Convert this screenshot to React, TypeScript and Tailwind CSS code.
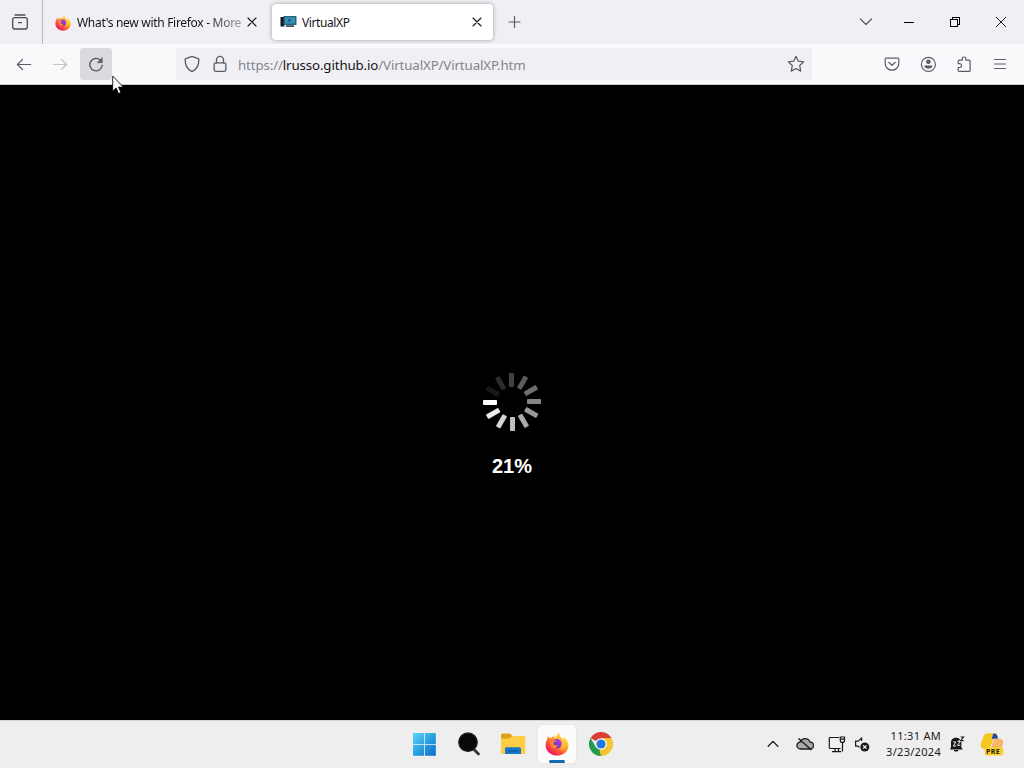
import type { ReactNode } from 'react'

interface IconProps {
    className?: string
}

interface SlotProps {
    className?: string
    children: ReactNode
}

const SPOKES = [
    '#424242', '#5b5b5b', '#6f6f6f', '#858585', '#999999', '#acacac',
    '#bebebe', '#d3d3d3', '#ececec', '#ffffff', '#171717', '#2b2b2b',
]

const stroke = {
    viewBox: '0 0 16 16',
    fill: 'none',
    stroke: 'currentColor',
    strokeWidth: 1.2,
    strokeLinecap: 'round' as const,
    strokeLinejoin: 'round' as const,
}

function Slot({ className = '', children }: SlotProps) {
    return <div className={`flex shrink-0 items-center justify-center ${className}`}>{children}</div>
}

function FirefoxIcon({ className }: IconProps) {
    return (
        <svg viewBox="0 0 24 24" className={className}>
            <defs>
                <linearGradient id="fxBody" x1="0.85" y1="0.1" x2="0.2" y2="0.9">
                    <stop offset="0" stopColor="#fff044" />
                    <stop offset="0.35" stopColor="#ffb02e" />
                    <stop offset="0.65" stopColor="#ff6038" />
                    <stop offset="1" stopColor="#ee1760" />
                </linearGradient>
                <linearGradient id="fxGlobe" x1="0.7" y1="0" x2="0.3" y2="1">
                    <stop offset="0" stopColor="#b13bea" />
                    <stop offset="1" stopColor="#583acb" />
                </linearGradient>
            </defs>
            <path
                d="M14.8 0.5c-1 3 0.5 4 2.3 5.6c0.8 0.7 1.2 1.5 1.5 2.3c0.5-1.3 0.3-2.6 0-3.7c3 2.2 4.9 5.2 4.9 8.7c0 5.7-5 10.1-11.5 10.1S0.6 19 0.6 12.9c0-3 1.1-5 2-6.2V3.9c0.7 0.6 1.2 1.2 1.6 1.9c0.8-0.2 1.7-0.2 2.6 0.1C7.2 4.9 8.2 4 9.4 3.6C9 4.8 9.4 5.6 10.5 6c1-2.7 2.2-4.4 4.3-5.5z"
                fill="url(#fxBody)"
            />
            <circle cx="11.9" cy="11.6" r="4.7" fill="url(#fxGlobe)" />
            <path d="M5.1 7.2c2 1.6 4 1.3 6.1 1.4c-0.5 1.4-2 1.7-2.6 2.2c-0.4 0.7 0 2 1.4 2.3c1.2 0.3 2-0.3 2.8 0c-0.6 1.8-1.8 3.2-3.2 3.4c-3.9-0.6-5.3-5.1-4.5-9.3z" fill="#ff842c" />
            <path d="M15.6 8c2.7 2.9 2.2 8.1-1.3 10.3c5.8-0.6 8.2-5.8 5.3-10.4z" fill="#ffc632" opacity="0.75" />
        </svg>
    )
}

function CloseIcon({ className }: IconProps) {
    return (
        <svg {...stroke} className={className}>
            <path d="M4 4l8 8M12 4l-8 8" strokeWidth="1.1" />
        </svg>
    )
}

function Spinner() {
    return (
        <svg width="60" height="60" viewBox="-30 -30 60 60">
            {SPOKES.map((color, i) => (
                <rect key={color} x="-2" y="-29" width="5" height="14" rx="0.8" fill={color} transform={`rotate(${i * 30}) translate(-1 0)`} />
            ))}
        </svg>
    )
}

function TabStrip() {
    return (
        <div className="flex h-11 shrink-0 bg-[#f0f0f4] text-[#15141a]">
            <Slot className="w-[43px] border-r border-[#b8b8bd] pr-0.5 text-[#4b4b53]">
                <svg width="18" height="18" viewBox="0 0 18 18" fill="none" stroke="currentColor" strokeWidth="1.3" strokeLinecap="round">
                    <path d="M4 2h10" />
                    <rect x="1.7" y="4.6" width="14.6" height="11.4" rx="2" />
                    <path d="M7.5 9.6h3" />
                </svg>
            </Slot>
            <div className="flex h-11 w-[229px] items-center pl-3">
                <FirefoxIcon className="mt-0.5 size-4 shrink-0" />
                <div className="ml-1.5 mt-0.5 w-[165px] whitespace-nowrap text-[12px] tracking-[-0.3px] [mask-image:linear-gradient(to_right,#000_78%,transparent_112%)]">
                    What's new with Firefox - More
                </div>
                <CloseIcon className="ml-0.5 size-4 shrink-0" />
            </div>
            <div className="mt-1 flex h-9 w-[221px] items-center rounded bg-white pl-2 shadow-[0_0_4px_rgba(0,0,0,0.35)]">
                <svg width="18" height="16" viewBox="0 0 18 16">
                    <rect x="0.5" y="3" width="4" height="9.5" fill="#141b20" />
                    <rect x="3.5" y="2" width="13" height="9" rx="0.5" fill="#26647f" />
                    <rect x="5" y="3.3" width="10" height="6.2" fill="#3693b5" />
                    <circle cx="9.5" cy="6.4" r="1.7" fill="#245f91" />
                    <path d="M6 12.1h8" stroke="#263b46" strokeWidth="1.6" />
                </svg>
                <div className="ml-1 mt-0.5 flex-1 text-[12px] tracking-[-0.4px]">VirtualXP</div>
                <CloseIcon className="mr-2 size-4" />
            </div>
            <Slot className="w-[43px] text-[#5b5b66]">
                <svg {...stroke} className="size-4">
                    <path d="M7.5 2.5v11M2 8h11" />
                </svg>
            </Slot>
            <div className="flex-1" />
            <Slot className="w-10 text-[#5b5b66]">
                <svg {...stroke} className="size-4">
                    <path d="M2.5 5l5.5 5.5L13.5 5" />
                </svg>
            </Slot>
            <Slot className="w-[46px]">
                <div className="h-px w-2.5 bg-black" />
            </Slot>
            <Slot className="w-[46px]">
                <svg width="10" height="10" viewBox="0 0 10 10" fill="none" stroke="#000" shapeRendering="crispEdges">
                    <path d="M0.5 2.5h7v7h-7zM2.5 2.5v-2h7v7h-2" />
                </svg>
            </Slot>
            <Slot className="w-[46px]">
                <svg width="10" height="10" viewBox="0 0 10 10" stroke="#000" strokeWidth="0.9">
                    <path d="M0 0l10 10M10 0L0 10" />
                </svg>
            </Slot>
        </div>
    )
}

function Toolbar() {
    return (
        <div className="relative flex h-[41px] shrink-0 items-start border-b border-[#c9c9cd] bg-[#f9f9fb] pl-2 pr-2 pt-1 text-[#5b5b66]">
            <div className="flex gap-1">
                <Slot className="size-8">
                    <svg {...stroke} className="size-4 overflow-visible" strokeWidth="1.2">
                        <path d="M14.7 8.5H1.5M6.5 3.5L1.4 8.5L6.5 13.5" />
                    </svg>
                </Slot>
                <Slot className="size-8 text-[#c2c2c7]">
                    <svg {...stroke} className="size-4 overflow-visible" strokeWidth="1.2">
                        <path d="M1.5 8.5h13M9.5 3.5l5.1 5L9.5 13.5" />
                    </svg>
                </Slot>
                <Slot className="size-8 rounded bg-[#dadbdf]">
                    <svg {...stroke} className="size-4" strokeWidth="1.4">
                        <path d="M12.4 4.2A6.2 6.2 0 1 0 14.2 9.3" />
                        <path d="M14.3 1.8v4.9H9.4z" fill="currentColor" strokeWidth="0.6" />
                    </svg>
                </Slot>
            </div>
            <div className="ml-16 flex h-8 w-[636px] items-center rounded bg-[#f0f0f4]">
                <Slot className="w-8">
                    <svg {...stroke} className="size-[18px]">
                        <path d="M8 1.2l6 2.2c0.4 5.5-1.2 9.2-6 11.4C3.2 12.6 1.6 8.9 2 3.4z" />
                    </svg>
                </Slot>
                <Slot className="w-6">
                    <svg {...stroke} className="size-[18px]">
                        <rect x="2.8" y="7" width="10.4" height="7.5" rx="1.3" />
                        <path d="M4.9 7V4.3a3.1 3.1 0 0 1 6.2 0V7" />
                    </svg>
                </Slot>
                <div className="ml-1.5 flex-1 whitespace-nowrap pt-1 text-[13.3px] tracking-[-0.13px] text-[#84848c]">
                    https://<span className="text-[#15141a]">lrusso.github.io</span>/VirtualXP/VirtualXP.htm
                </div>
                <Slot className="w-8">
                    <svg {...stroke} className="size-[18px]" strokeWidth="1.1">
                        <path d="M8 1.2l2 4.3l4.8 0.6l-3.5 3.3l0.9 4.9L8 12l-4.2 2.3l0.9-4.9L1.2 6.1L6 5.5z" />
                    </svg>
                </Slot>
            </div>
            <div className="flex-1" />
            <div className="flex gap-1">
                <Slot className="size-8">
                    <svg {...stroke} className="size-4">
                        <path d="M2.3 2.2h11.4c0.7 0 1.1 0.4 1.1 1.1v4.1a6.8 6.8 0 0 1-13.6 0V3.3c0-0.7 0.4-1.1 1.1-1.1z" />
                        <path d="M4.7 6.3L8 9.3l3.3-3" />
                    </svg>
                </Slot>
                <Slot className="size-8">
                    <svg {...stroke} className="size-4 overflow-visible">
                        <circle cx="8.4" cy="8.4" r="7" />
                        <circle cx="8.4" cy="5.8" r="2.3" fill="currentColor" stroke="none" />
                        <path d="M4.3 9.4h8.2c0.2 1.8-1.9 3.2-4.1 3.2s-4.3-1.4-4.1-3.2z" fill="currentColor" stroke="none" />
                    </svg>
                </Slot>
                <Slot className="size-8">
                    <svg {...stroke} className="size-4">
                        <path d="M2.2 7.1V5.2c0-0.6 0.4-1 1-1h3.1V2.8a1.8 1.8 0 0 1 3.6 0v1.4h3.2c0.6 0 1 0.4 1 1v9.2c0 0.6-0.4 1-1 1h-9.9c-0.6 0-1-0.4-1-1v-2.9h1.5a1.9 1.9 0 0 0 0-3.8H2.2z" />
                    </svg>
                </Slot>
                <Slot className="size-8">
                    <svg {...stroke} className="size-4">
                        <path d="M2.5 3.5h11M2.5 8h11M2.5 12.5h11" />
                    </svg>
                </Slot>
            </div>
            <svg className="absolute left-28 top-[31px] z-10" width="12" height="20" viewBox="0 0 12 20">
                <path d="M0.7 1v15.2l3.4-3.3l2.4 5.6l2.4-1l-2.4-5.4h4.8z" fill="#fff" stroke="#111" strokeWidth="0.9" />
            </svg>
        </div>
    )
}

function Taskbar() {
    return (
        <div className="flex h-12 shrink-0 border-t border-[#d5d5d5] bg-[#eeeeee] pb-px">
            <div className="ml-[402px] flex items-center">
                <Slot className="w-11">
                    <svg width="24" height="24" viewBox="0 0 24 24">
                        <defs>
                            <linearGradient id="win" x1="0" y1="0" x2="24" y2="24" gradientUnits="userSpaceOnUse">
                                <stop offset="0" stopColor="#5fdcfb" />
                                <stop offset="0.55" stopColor="#279fe0" />
                                <stop offset="1" stopColor="#0b68c3" />
                            </linearGradient>
                        </defs>
                        <path d="M1 1h11v11h-11zM12.8 1h11v11h-11zM1 12.8h11v11h-11zM12.8 12.8h11v11h-11z" fill="url(#win)" />
                    </svg>
                </Slot>
                <Slot className="ml-px w-11">
                    <svg width="24" height="24" viewBox="0 0 24 24">
                        <path d="M16.5 17l5 5" stroke="#303030" strokeWidth="2.6" strokeLinecap="round" />
                        <circle cx="11" cy="10.2" r="9.3" fill="#080808" stroke="#252525" strokeWidth="1.2" />
                    </svg>
                </Slot>
                <Slot className="w-11">
                    <svg width="26" height="24" viewBox="0 0 26 24">
                        <path d="M2 1.5h8l2.6 3H24v6H1v-8z" fill="#dfa016" />
                        <path d="M1 6.5h8.5l2.8-2.4H24c0.8 0 1.2 0.4 1.2 1.2V21c0 0.7-0.4 1.1-1.2 1.1H2c-0.7 0-1.1-0.4-1.1-1.1z" fill="#fccd45" />
                        <path d="M5 22.1v-5.3c0-1 0.6-1.6 1.6-1.6h12.8c1 0 1.6 0.6 1.6 1.6v5.3z" fill="#1676c8" />
                        <path d="M8.5 18.8h9" stroke="#10539a" strokeWidth="1.4" />
                    </svg>
                </Slot>
                <Slot className="w-11">
                    <div className="flex h-[38px] w-[38px] flex-col items-center justify-between rounded bg-[#fcfcfc] pt-[7px] shadow-[0_0_1px_rgba(0,0,0,0.2)]">
                        <FirefoxIcon className="size-6" />
                        <div className="h-[3px] w-4 rounded-full bg-[#1769b0]" />
                    </div>
                </Slot>
                <Slot className="w-11">
                    <svg width="24" height="24" viewBox="0 0 24 24">
                        <path d="M12 12L1.6 6A12 12 0 0 1 22.4 6z" fill="#d93f35" />
                        <path d="M12 12V6h10.4A12 12 0 0 1 12 24z" fill="#f8c530" />
                        <path d="M1.6 6L6.8 15l5.2 3l3 0.2L12 24A12 12 0 0 1 1.6 6z" fill="#269b4b" />
                        <path d="M17.2 15L12 24l-1.5-5.5z" fill="#f8c530" />
                        <circle cx="12" cy="12" r="5.8" fill="#fff" />
                        <circle cx="12" cy="12" r="4.6" fill="#2777e2" />
                    </svg>
                </Slot>
            </div>
            <div className="flex-1" />
            <div className="flex items-center text-[#1b1b1b]">
                <Slot className="w-8">
                    <svg {...stroke} className="size-4">
                        <path d="M3.2 10.2L8 5.4l4.8 4.8" strokeWidth="1.3" />
                    </svg>
                </Slot>
                <Slot className="w-8">
                    <svg width="18" height="16" viewBox="0 0 18 16" fill="none" stroke="currentColor" strokeWidth="1.3">
                        <path d="M4.6 13a3.5 3.5 0 0 1-0.4-7a5.3 5.3 0 0 1 9.8 0a3.5 3.5 0 0 1 0 7z" fill="#aaa" />
                        <path d="M2.5 2.5l13 11.5" strokeWidth="1.5" />
                    </svg>
                </Slot>
                <Slot className="w-8">
                    <svg width="18" height="18" viewBox="0 0 18 18" fill="none" stroke="currentColor" strokeWidth="1.2">
                        <path d="M11 2.5H2.2c-0.6 0-0.9 0.3-0.9 0.9v9.2c0 0.6 0.3 0.9 0.9 0.9h10.3M7 13.5v3M10.5 13.5v3M4 16.6h9.2M14.5 7.5v9" />
                        <path d="M12.3 2h4.2v3.7c0 1-0.8 1.7-2.1 1.7s-2.1-0.7-2.1-1.7zM12.3 4.2h4.2" />
                    </svg>
                </Slot>
                <Slot className="w-[18px]">
                    <svg width="16" height="18" viewBox="0 0 16 18" fill="none" stroke="currentColor" strokeWidth="1.2">
                        <path d="M7.6 6V3L4.2 6.1H1.6v5.1h2.5l1.3 1.2" />
                        <circle cx="10.8" cy="12" r="4.5" fill="currentColor" stroke="none" />
                        <path d="M9.1 10.3l3.4 3.4M12.5 10.3l-3.4 3.4" stroke="#fff" />
                    </svg>
                </Slot>
                <div className="w-[70px] whitespace-nowrap text-right text-[11px] leading-4 tracking-[0.3px]">
                    <div>11:31 AM</div>
                    <div>3/23/2024</div>
                </div>
                <Slot className="w-8">
                    <svg width="16" height="18" viewBox="0 0 16 18">
                        <path d="M2 7.5C2 4.5 4.2 2.8 7 2.8s5.4 1.7 5.4 4.7v5l1.4 2H0.8l1.2-2zM4.7 15h4.8c-0.4 2-4.4 2-4.8 0z" fill="#171717" />
                        <path d="M4.2 7h2.8l-2.8 4h2.8M8.4 6.3h2.9l-2.9 4h2.9" fill="none" stroke="#eee" />
                        <path d="M11.6 2h3l-3 3.6h3" fill="none" stroke="#eee" strokeWidth="2.6" />
                        <path d="M11.6 2h3l-3 3.6h3" fill="none" stroke="#171717" strokeWidth="1.1" />
                    </svg>
                </Slot>
                <Slot className="ml-[3px] mr-4 w-8">
                    <div className="relative h-6 w-6">
                        <svg width="24" height="24" viewBox="0 0 24 24">
                            <path d="M8.5 1.2h6.5L11.2 13c-0.8 2.6-1.9 4-4.2 4H4.6C1.2 17 0 14.3 1 11.2l2.2-6.4C4.1 2.3 5.8 1.2 8.5 1.2z" fill="#f5c720" />
                            <path d="M13.2 2c1.8-1 3.8 0 4.2 2l0.7 2.7h-6.4z" fill="#234a9f" />
                            <path d="M15.5 6.7h3.6c3.7 0 4.7 2.6 3.8 5.2l-2 6.3H10.7l1.9-7.8c0.6-2.4 1.3-3.7 2.9-3.7z" fill="#f9b56c" />
                            <rect x="4.8" y="15.2" width="18.4" height="8.2" rx="2" fill="#f9cf27" />
                        </svg>
                        <span className="absolute left-[6px] top-[16px] text-[7px] font-bold leading-[8px] tracking-[0.4px] text-[#27200b]">PRE</span>
                    </div>
                </Slot>
            </div>
        </div>
    )
}

export default function App() {
    return (
        <div className="flex h-[768px] w-[1024px] flex-col overflow-hidden bg-black font-['Noto_Sans','Open_Sans',sans-serif]">
            <TabStrip />
            <Toolbar />
            <main className="flex flex-1 flex-col items-center bg-black pt-[287px]">
                <Spinner />
                <div className="mt-[22px] font-['Liberation_Sans',Arial,sans-serif] text-[20px] font-bold leading-6 text-white">21%</div>
            </main>
            <Taskbar />
        </div>
    )
}
